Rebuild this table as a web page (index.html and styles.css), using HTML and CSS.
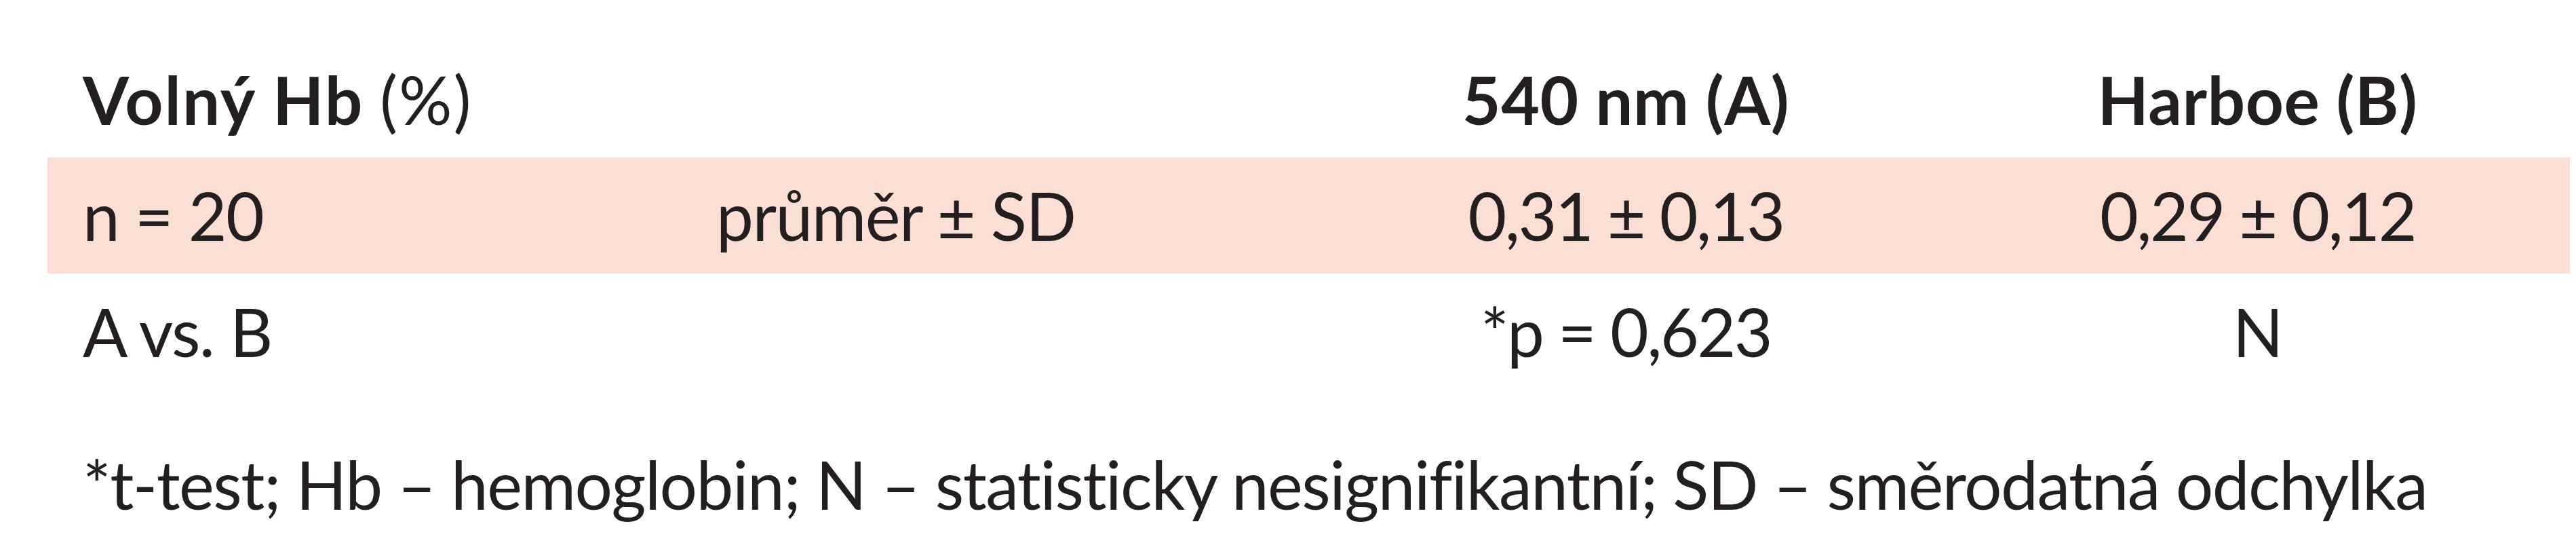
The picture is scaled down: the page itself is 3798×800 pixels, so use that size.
FILE: index.html
```html
<!DOCTYPE html>
<html lang="cs">
<head>
<meta charset="utf-8">
<title>Volný Hb</title>
<link rel="stylesheet" href="styles.css">
</head>
<body>
<div class="page">
  <div class="table">
    <div class="row head">
      <div class="cell c1"><span class="strong wide">Volný Hb</span> <span class="wide">(%)</span></div>
      <div class="cell c2"></div>
      <div class="cell c3 strong">540 nm (A)</div>
      <div class="cell c4 strong">Harboe (B)</div>
    </div>
    <div class="row band">
      <div class="cell c1">n = 20</div>
      <div class="cell c2">průměr ± SD</div>
      <div class="cell c3 num">0,31 ± 0,13</div>
      <div class="cell c4 num">0,29 ± 0,12</div>
    </div>
    <div class="row">
      <div class="cell c1">A vs. B</div>
      <div class="cell c2"></div>
      <div class="cell c3 num">*p = 0,623</div>
      <div class="cell c4">N</div>
    </div>
  </div>
  <p class="note">*t-test; Hb – hemoglobin; N – statisticky nesignifikantní; SD – směrodatná odchylka</p>
</div>
</body>
</html>
```
FILE: styles.css
```css
html, body {
  margin: 0;
  padding: 0;
  background: #ffffff;
}

body {
  font-family: Lato, "Open Sans", "Liberation Sans", sans-serif;
  font-size: 98px;
  color: #231f20;
}

.page {
  width: 3719px;
  margin-left: 70px;
  padding-top: 61px;
}

.table {
  display: flex;
  flex-direction: column;
}

.row {
  display: grid;
  grid-template-columns: 986px 876px 930px 927px;
  height: 171px;
  line-height: 171px;
  letter-spacing: -1.5px;
}

.band {
  background: #fbdfd4;
}

.cell {
  white-space: nowrap;
}

.c1 {
  padding-left: 52px;
}

.c3 {
  text-align: center;
}

.c4 {
  text-align: center;
  padding-left: 6px;
}

.strong {
  font-weight: 700;
  letter-spacing: 0.5px;
}

.wide {
  letter-spacing: 2px;
}

.num {
  letter-spacing: -2.5px;
}

.note {
  margin: 54px 0 0 0;
  padding-left: 52px;
  line-height: 171px;
  white-space: nowrap;
  letter-spacing: -1.5px;
}
```
